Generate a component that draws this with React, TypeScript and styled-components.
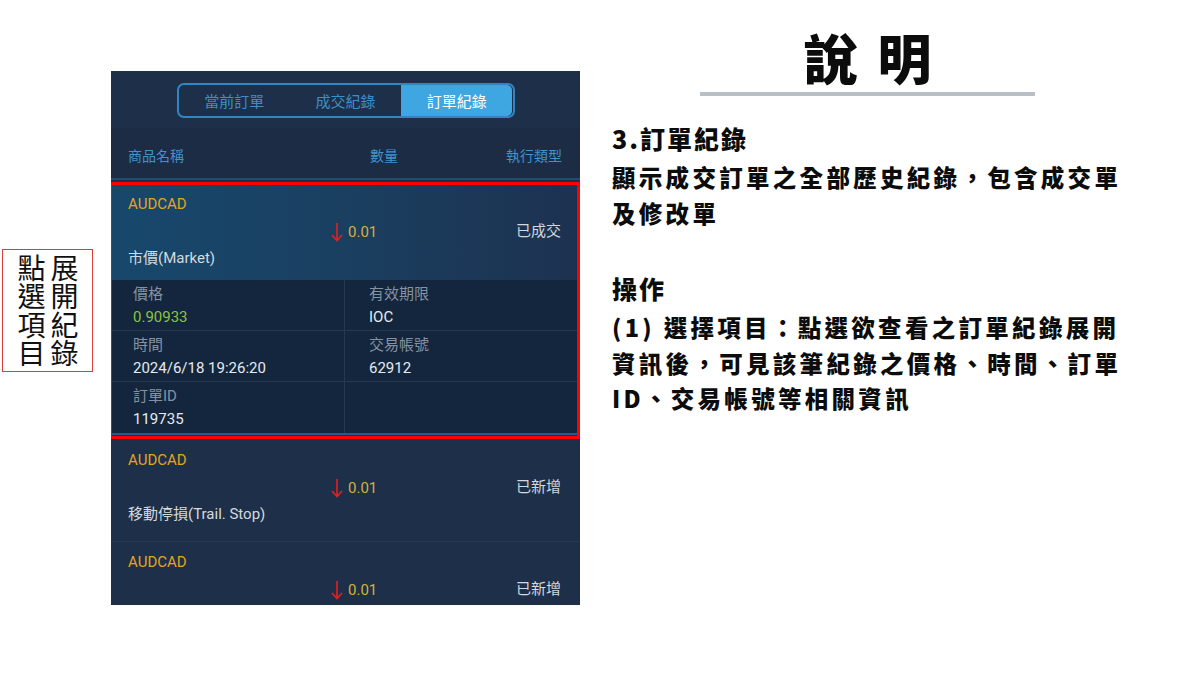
import React from "react";
import styled, { createGlobalStyle } from "styled-components";

const Global = createGlobalStyle`
  html, body { margin: 0; padding: 0; background: #ffffff; }
  body { font-family: "Noto Sans CJK TC", "Noto Sans", sans-serif; }
  * { box-sizing: border-box; }
`;

const Page = styled.div`
  width: 1200px;
  height: 675px;
  display: flex;
  align-items: flex-start;
  overflow: hidden;
`;

const NoteCol = styled.div`
  width: 111px;
  flex-shrink: 0;
  padding-left: 2px;
  padding-top: 249px;
`;

const NoteBox = styled.div`
  width: 91px;
  height: 123px;
  border: 1px solid #e23a3a;
  display: flex;
  justify-content: center;
  align-items: center;
`;

const NoteText = styled.div`
  writing-mode: vertical-lr;
  font-family: "Noto Sans CJK TC", sans-serif;
  font-size: 28px;
  line-height: 33px;
  letter-spacing: 0.5px;
  color: #111;
`;

const Phone = styled.div`
  margin-top: 71px;
  width: 469px;
  height: 534px;
  flex-shrink: 0;
  background: #1e3049;
  font-family: Roboto, "Noto Sans CJK TC", sans-serif;
  display: flex;
  flex-direction: column;
  overflow: hidden;
  & > * {
    flex-shrink: 0;
  }
`;

const TabBar = styled.div`
  height: 57px;
  display: flex;
  justify-content: center;
  padding-top: 12px;
`;

const Segmented = styled.div`
  width: 338px;
  height: 35px;
  border: 2px solid #2f86c0;
  border-radius: 7px;
  display: flex;
  overflow: hidden;
`;

const Tab = styled.div<{ $active?: boolean }>`
  flex: 1;
  display: flex;
  align-items: center;
  justify-content: center;
  font-size: 15px;
  color: ${(p) => (p.$active ? "#ffffff" : "#3d8fc6")};
  background: ${(p) => (p.$active ? "#3ea6e0" : "transparent")};
  border-radius: ${(p) => (p.$active ? "0 5px 5px 0" : "0")};
`;

const HeaderRow = styled.div`
  height: 52px;
  background: #1b2c44;
  border-bottom: 2px solid #1d4d71;
  display: grid;
  grid-template-columns: 242px 1fr auto;
  align-items: center;
  padding: 4px 18px 0 17px;
  font-size: 14px;
  color: #3f94cc;
`;

const HeadRight = styled.span`
  text-align: right;
`;

const Highlight = styled.div`
  position: relative;
  margin-top: 4px;
  margin-bottom: 5px;
`;

const RedFrame = styled.div`
  position: absolute;
  left: -2px;
  right: 0;
  top: -2px;
  bottom: -4px;
  border: 3px solid #ff0000;
  pointer-events: none;
`;

const OrderRow = styled.div<{ $expanded?: boolean; $h: number }>`
  height: ${(p) => p.$h}px;
  display: grid;
  grid-template-columns: 203px 1fr auto;
  grid-template-rows: 24px 32px 16px;
  align-content: start;
  align-items: center;
  padding: 8px 19px 0 17px;
  background: ${(p) =>
    p.$expanded
      ? "linear-gradient(90deg, #17486c 0%, #1a3f60 50%, #1d3150 100%)"
      : "#1e3049"};
  border-bottom: ${(p) => (p.$expanded ? "none" : "1px solid #253a53")};
`;

const Symbol = styled.div`
  grid-column: 1 / 4;
  grid-row: 1;
  color: #e0a61e;
  font-size: 15px;
`;

const Qty = styled.div`
  grid-column: 2;
  grid-row: 2;
  display: flex;
  align-items: center;
  gap: 5px;
  color: #d4b23c;
  font-size: 15px;
  line-height: 20px;
`;

const Status = styled.div`
  grid-column: 3;
  grid-row: 2;
  text-align: right;
  color: #d4d8dc;
  font-size: 15px;
  line-height: 20px;
  margin-top: -3px;
`;

const OrderType = styled.div`
  grid-column: 1 / 4;
  grid-row: 3;
  color: #d4d9de;
  font-size: 15px;
`;

const Details = styled.div`
  background: #13263d;
  display: grid;
  grid-template-columns: 233px 1fr;
  border-bottom: 2px solid #1f5d8a;
`;

const Cell = styled.div<{ $right?: boolean; $last?: boolean }>`
  height: 51px;
  padding: 5px 0 0 ${(p) => (p.$right ? "24px" : "22px")};
  border-left: ${(p) => (p.$right ? "1px solid #233950" : "none")};
  border-bottom: ${(p) => (p.$last ? "none" : "1px solid #233950")};
  display: flex;
  flex-direction: column;
  gap: 4px;
`;

const Label = styled.div`
  color: #8592a1;
  font-size: 15px;
  line-height: 19px;
`;

const Value = styled.div<{ $green?: boolean }>`
  color: ${(p) => (p.$green ? "#8bc43d" : "#e6eaee")};
  font-size: 15px;
  line-height: 19px;
`;

const Right = styled.div`
  margin-left: 32px;
  width: 540px;
  display: flex;
  flex-direction: column;
  color: #0c0c0c;
  font-family: "Noto Sans CJK TC", sans-serif;
  font-weight: 900;
`;

const TitleWrap = styled.div`
  margin-left: 88px;
  width: 335px;
  padding-top: 22px;
  border-bottom: 4px solid #b9bfc7;
  text-align: center;
`;

const Title = styled.div`
  font-size: 54px;
  font-weight: 900;
  line-height: 70px;
  letter-spacing: 20px;
  padding-left: 20px;
`;

const Heading = styled.div<{ $top: number }>`
  margin-top: ${(p) => p.$top}px;
  font-size: 25px;
  line-height: 35px;
  letter-spacing: 2px;
`;

const Body = styled.div`
  font-size: 23.5px;
  line-height: 35.5px;
  letter-spacing: 3.3px;
  margin-top: 4px;
`;

const DownArrow = () => (
  <svg width="12" height="20" viewBox="0 0 12 20">
    <path d="M6 1 V18.5 M1 13 L6 18.5 L11 13" stroke="#e52020" strokeWidth="1.6" fill="none" />
  </svg>
);

type Row = { status: string; type?: string; h: number };

const RowView = ({ r, expanded }: { r: Row; expanded?: boolean }) => (
  <OrderRow $expanded={expanded} $h={r.h}>
    <Symbol>AUDCAD</Symbol>
    <Qty>
      <DownArrow />
      <span>0.01</span>
    </Qty>
    <Status>{r.status}</Status>
    {r.type && <OrderType>{r.type}</OrderType>}
  </OrderRow>
);

export default function App() {
  return (
    <Page>
      <Global />
      <NoteCol>
        <NoteBox>
          <NoteText>
            點選項目
            <br />
            展開紀錄
          </NoteText>
        </NoteBox>
      </NoteCol>
      <Phone>
        <TabBar>
          <Segmented>
            <Tab>當前訂單</Tab>
            <Tab>成交紀錄</Tab>
            <Tab $active>訂單紀錄</Tab>
          </Segmented>
        </TabBar>
        <HeaderRow>
          <span>商品名稱</span>
          <span>數量</span>
          <HeadRight>執行類型</HeadRight>
        </HeaderRow>
        <Highlight>
          <RowView r={{ status: "已成交", type: "市價(Market)", h: 96 }} expanded />
          <Details>
            <Cell>
              <Label>價格</Label>
              <Value $green>0.90933</Value>
            </Cell>
            <Cell $right>
              <Label>有效期限</Label>
              <Value>IOC</Value>
            </Cell>
            <Cell>
              <Label>時間</Label>
              <Value>2024/6/18 19:26:20</Value>
            </Cell>
            <Cell $right>
              <Label>交易帳號</Label>
              <Value>62912</Value>
            </Cell>
            <Cell $last>
              <Label>訂單ID</Label>
              <Value>119735</Value>
            </Cell>
            <Cell $right $last />
          </Details>
          <RedFrame />
        </Highlight>
        <RowView r={{ status: "已新增", type: "移動停損(Trail. Stop)", h: 102 }} />
        <RowView r={{ status: "已新增", h: 99 }} />
      </Phone>
      <Right>
        <TitleWrap>
          <Title>說明</Title>
        </TitleWrap>
        <Heading $top={25}>3.訂單紀錄</Heading>
        <Body>
          顯示成交訂單之全部歷史紀錄，包含成交單
          <br />
          及修改單
        </Body>
        <Heading $top={40}>操作</Heading>
        <Body>
          (1) 選擇項目：點選欲查看之訂單紀錄展開
          <br />
          資訊後，可見該筆紀錄之價格、時間、訂單
          <br />
          ID、交易帳號等相關資訊
        </Body>
      </Right>
    </Page>
  );
}
